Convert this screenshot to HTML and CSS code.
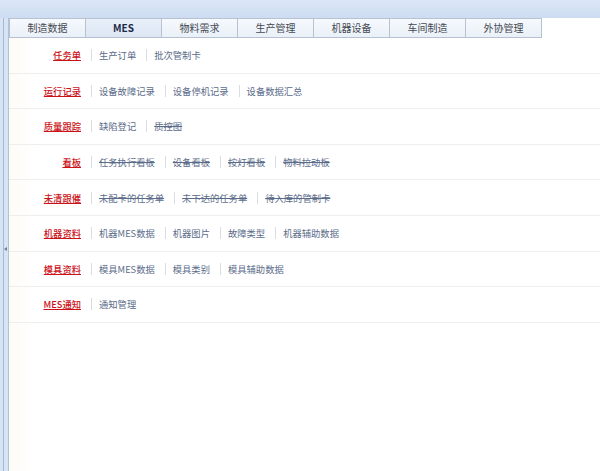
FILE: index.html
```html
<!DOCTYPE html>
<html lang="zh-CN">
<head>
    <meta charset="UTF-8">
    <title>MES</title>
    <link rel="stylesheet" href="styles.css">
</head>
<body>
    <div class="topbar"></div>
    <div class="frame">
        <div class="side">
            <span class="side-arrow"></span>
        </div>
        <div class="content">
            <div class="tabs">
                <div class="tab">制造数据</div>
                <div class="tab tab-active">MES</div>
                <div class="tab">物料需求</div>
                <div class="tab">生产管理</div>
                <div class="tab">机器设备</div>
                <div class="tab">车间制造</div>
                <div class="tab">外协管理</div>
            </div>

            <div class="row">
                <a class="label">任务单</a>
                <span class="sep"></span>
                <a class="link">生产订单</a>
                <span class="sep"></span>
                <a class="link">批次管制卡</a>
            </div>
            <div class="row">
                <a class="label">运行记录</a>
                <span class="sep"></span>
                <a class="link">设备故障记录</a>
                <span class="sep"></span>
                <a class="link">设备停机记录</a>
                <span class="sep"></span>
                <a class="link">设备数据汇总</a>
            </div>
            <div class="row">
                <a class="label">质量跟踪</a>
                <span class="sep"></span>
                <a class="link">缺陷登记</a>
                <span class="sep"></span>
                <a class="link link-off">质控图</a>
            </div>
            <div class="row">
                <a class="label">看板</a>
                <span class="sep"></span>
                <a class="link link-off">任务执行看板</a>
                <span class="sep"></span>
                <a class="link link-off">设备看板</a>
                <span class="sep"></span>
                <a class="link link-off">按灯看板</a>
                <span class="sep"></span>
                <a class="link link-off">物料拉动板</a>
            </div>
            <div class="row">
                <a class="label">未清跟催</a>
                <span class="sep"></span>
                <a class="link link-off">未配卡的任务单</a>
                <span class="sep"></span>
                <a class="link link-off">未下达的任务单</a>
                <span class="sep"></span>
                <a class="link link-off">待入库的管制卡</a>
            </div>
            <div class="row">
                <a class="label">机器资料</a>
                <span class="sep"></span>
                <a class="link">机器MES数据</a>
                <span class="sep"></span>
                <a class="link">机器图片</a>
                <span class="sep"></span>
                <a class="link">故障类型</a>
                <span class="sep"></span>
                <a class="link">机器辅助数据</a>
            </div>
            <div class="row">
                <a class="label">模具资料</a>
                <span class="sep"></span>
                <a class="link">模具MES数据</a>
                <span class="sep"></span>
                <a class="link">模具类别</a>
                <span class="sep"></span>
                <a class="link">模具辅助数据</a>
            </div>
            <div class="row">
                <a class="label">MES通知</a>
                <span class="sep"></span>
                <a class="link">通知管理</a>
            </div>
        </div>
    </div>
</body>
</html>
```

FILE: styles.css
```css
html, body {
    height: 100%;
}
body {
    margin: 0;
    font-family: "Noto Sans CJK SC", "Liberation Sans", sans-serif;
    font-size: 10px;
    background-color: #ffffff;
    display: flex;
    flex-direction: column;
    overflow: hidden;
}
.topbar {
    height: 18px;
    flex-shrink: 0;
    background: linear-gradient(#dbe7f6, #cddcf1);
}
.frame {
    flex: 1;
    display: flex;
}
.side {
    position: relative;
    width: 8px;
    flex-shrink: 0;
    background-color: #d6e4f6;
    border-right: 1px solid #b4c1d2;
    box-shadow: inset -4px 0 0 #d6e4f6, inset -5px 0 0 #a9b9cd;
}
.side-arrow {
    position: absolute;
    left: 4px;
    top: 229px;
    width: 0;
    height: 0;
    border-top: 2px solid transparent;
    border-bottom: 2px solid transparent;
    border-right: 3px solid #6f7f94;
}
.content {
    flex: 1;
    background: linear-gradient(90deg, #fdfbf6, #ffffff 26px);
}
.tabs {
    display: flex;
    height: 20px;
}
.tab {
    width: 75px;
    height: 18px;
    line-height: 18px;
    text-align: center;
    color: #454a52;
    background: linear-gradient(#f6f9fd, #eaf0f8);
    border: 1px solid #b6c2d1;
    border-left: none;
}
.tab:first-child {
    border-left: 1px solid #b6c2d1;
}
.tab-active {
    font-weight: bold;
    color: #1c2c48;
    background: linear-gradient(#e9f0f9, #dce6f3);
}
.row {
    display: flex;
    align-items: center;
    height: 34.6px;
    font-size: 9.3px;
    border-bottom: 1px solid #eeeeee;
}
.label {
    width: 72px;
    text-align: right;
    color: #cc1219;
    text-decoration: underline;
    font-weight: 500;
}
.sep {
    width: 1px;
    height: 12px;
    margin: 0 7px 0 10px;
    background-color: #d9dce1;
}
.link {
    color: #5b6c8a;
    cursor: pointer;
}
.link-off {
    text-decoration: line-through;
}
```
